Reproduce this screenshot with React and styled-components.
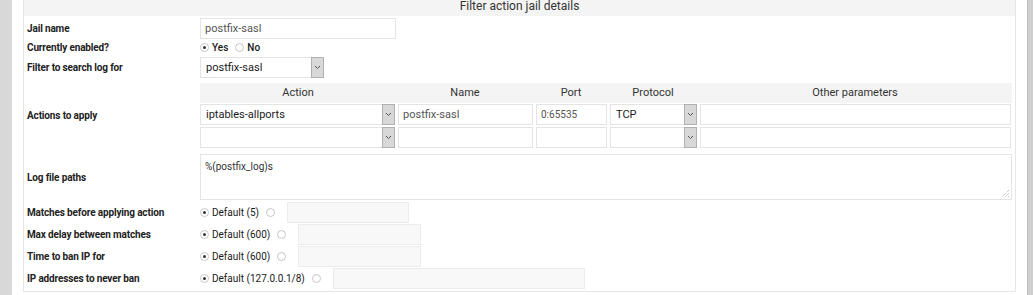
import React from 'react';
import styled, { createGlobalStyle } from 'styled-components';

const GlobalStyle = createGlobalStyle`
  html, body {
    margin: 0;
    padding: 0;
    background: #fff;
    font-family: Roboto, "Noto Sans", sans-serif;
    color: #222;
  }
`;

const Page = styled.div`
  display: flex;
  width: 1033px;
  height: 295px;
  overflow: hidden;
`;

const SideBar = styled.div`
  flex: 0 0 ${props => props.width}px;
  background: ${props => props.color};
  border-left: ${props => props.edge ? '1px solid #bdbdbd' : 'none'};
`;

const Main = styled.div`
  flex: 1;
  padding: 0 11px;
  min-width: 0;
`;

const Panel = styled.div`
  border: 1px solid #e6e6e6;
  border-top: none;
  background: #fff;
  padding: 0 3px 2px 2px;
`;

const PanelHeader = styled.div`
  height: 16px;
  margin: 0 -3px 1px -2px;
  background: #f4f4f4;
  text-align: center;
  font-size: 12px;
  line-height: 12px;
  color: #333;
`;

const Row = styled.div`
  display: grid;
  grid-template-columns: 174px 1fr;
  align-items: center;
  min-height: ${props => props.h || 22}px;
`;

const Label = styled.div`
  padding-left: 1px;
  font-size: 10px;
  font-weight: 700;
  letter-spacing: -0.15px;
  color: #222;
`;

const Field = styled.div`
  display: flex;
  align-items: center;
  min-width: 0;
`;

const TextInput = styled.div`
  box-sizing: border-box;
  width: ${props => props.w ? `${props.w}px` : '100%'};
  height: 21px;
  margin-left: ${props => props.ml || 0}px;
  border: 1px solid ${props => props.muted ? '#ececec' : '#e4e4e4'};
  background: ${props => props.muted ? '#f8f8f8' : '#fff'};
  padding: 0 4px;
  font-size: ${props => props.small ? 10 : 11}px;
  line-height: 19px;
  color: #555;
  white-space: nowrap;
  overflow: hidden;
`;

const SelectBox = styled.div`
  box-sizing: border-box;
  display: flex;
  width: ${props => props.w ? `${props.w}px` : '100%'};
  height: 21px;
  border: 1px solid #e4e4e4;
  background: #fff;
`;

const SelectValue = styled.div`
  flex: 1;
  padding: 0 5px;
  font-size: 11px;
  line-height: 19px;
  color: #1a1a1a;
  white-space: nowrap;
  overflow: hidden;
`;

const SelectArrow = styled.div`
  flex: 0 0 11px;
  display: flex;
  align-items: center;
  justify-content: center;
  margin: -1px -1px -1px 0;
  background: #d8d8d8;
  border: 1px solid #b0b0b0;
`;

const RadioGroup = styled.div`
  display: flex;
  align-items: center;
  font-size: 10px;
  font-weight: ${props => props.strong ? 500 : 400};
  color: #1a1a1a;
`;

const Radio = styled.span`
  box-sizing: border-box;
  display: inline-flex;
  align-items: center;
  justify-content: center;
  width: 9px;
  height: 9px;
  margin: 0 3px 0 ${props => props.ml || 0}px;
  border-radius: 50%;
  border: 1px solid #c6c6c6;
  background: #fff;
  &::after {
    content: '';
    width: 3px;
    height: 3px;
    border-radius: 50%;
    background: ${props => props.checked ? '#333' : 'transparent'};
  }
`;

const ActionsGrid = styled.div`
  display: grid;
  grid-template-columns: 196px 138px 74px 90px 1fr;
  row-gap: 2px;
  margin: 5px 0 5px;
`;

const HeadCell = styled.div`
  height: 20px;
  background: #f4f4f4;
  text-align: center;
  font-size: 11px;
  line-height: 20px;
  color: #333;
  margin-bottom: -1px;
`;

const Cell = styled.div`
  padding: ${props => props.first ? '0 1px 0 0' : '0 1px 0 2px'};
  min-width: 0;
`;

const TextArea = styled.div`
  position: relative;
  box-sizing: border-box;
  width: 100%;
  height: 46px;
  border: 1px solid #e4e4e4;
  padding: 6px 4px;
  font-size: 10px;
  color: #333;
`;

const Grip = styled.svg`
  position: absolute;
  right: 1px;
  bottom: 1px;
`;

const Chevron = () => (
  <svg width="7" height="5" viewBox="0 0 7 5">
    <path d="M1 1 L3.5 3.5 L6 1" fill="none" stroke="#555" strokeWidth="1" />
  </svg>
);

const Select = ({ w, value }) => (
  <SelectBox w={w}>
    <SelectValue>{value}</SelectValue>
    <SelectArrow><Chevron /></SelectArrow>
  </SelectBox>
);

const DefaultRow = ({ label, def, inputW }) => (
  <Row h={22}>
    <Label>{label}</Label>
    <Field>
      <RadioGroup>
        <Radio checked />
        Default ({def})
        <Radio ml={7} />
      </RadioGroup>
      <TextInput muted w={inputW} ml={9} />
    </Field>
  </Row>
);

const actions = [
  { action: 'iptables-allports', name: 'postfix-sasl', port: '0:65535', protocol: 'TCP' },
  { action: '', name: '', port: '', protocol: '' },
];

export default function App() {
  return (
    <Page>
      <GlobalStyle />
      <SideBar width={12} color="#d8d8d8" />
      <Main>
        <Panel>
          <PanelHeader>Filter action jail details</PanelHeader>
          <Row>
            <Label>Jail name</Label>
            <Field><TextInput w={196}>postfix-sasl</TextInput></Field>
          </Row>
          <Row h={17}>
            <Label>Currently enabled?</Label>
            <RadioGroup strong>
              <Radio checked />Yes
              <Radio ml={7} />No
            </RadioGroup>
          </Row>
          <Row>
            <Label>Filter to search log for</Label>
            <Field><Select w={124} value="postfix-sasl" /></Field>
          </Row>
          <Row>
            <Label>Actions to apply</Label>
            <ActionsGrid>
              {['Action', 'Name', 'Port', 'Protocol', 'Other parameters'].map(h => (
                <HeadCell key={h}>{h}</HeadCell>
              ))}
              {actions.map((a, i) => (
                <React.Fragment key={i}>
                  <Cell first><Select value={a.action} /></Cell>
                  <Cell><TextInput>{a.name}</TextInput></Cell>
                  <Cell><TextInput small>{a.port}</TextInput></Cell>
                  <Cell><Select value={a.protocol} /></Cell>
                  <Cell><TextInput /></Cell>
                </React.Fragment>
              ))}
            </ActionsGrid>
          </Row>
          <Row h={48}>
            <Label>Log file paths</Label>
            <TextArea>
              %(postfix_log)s
              <Grip width="9" height="9" viewBox="0 0 9 9">
                <path d="M8 1 L1 8 M8 4 L4 8 M8 7 L7 8" stroke="#aaa" strokeWidth="1" strokeDasharray="1 1" />
              </Grip>
            </TextArea>
          </Row>
          <DefaultRow label="Matches before applying action" def="5" inputW={122} />
          <DefaultRow label="Max delay between matches" def="600" inputW={123} />
          <DefaultRow label="Time to ban IP for" def="600" inputW={123} />
          <DefaultRow label="IP addresses to never ban" def="127.0.0.1/8" inputW={252} />
        </Panel>
      </Main>
      <SideBar width={5} color="#cfcfcf" edge />
    </Page>
  );
}
